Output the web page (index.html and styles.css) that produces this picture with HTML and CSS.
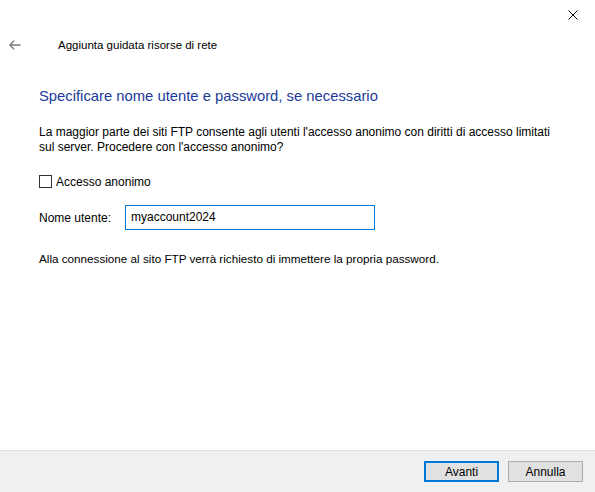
FILE: index.html
```html
<!DOCTYPE html>
<html>
<head>
    <meta charset="utf-8">
    <title>Aggiunta guidata risorse di rete</title>
    <link rel="stylesheet" href="styles.css">
</head>
<body>
    <div class="window">
        <div class="titlebar">
            <button class="close-btn" aria-label="Chiudi">
                <svg width="10" height="10" viewBox="0 0 10 10">
                    <path d="M0.5 0.5 L9.5 9.5 M9.5 0.5 L0.5 9.5" stroke="#000" stroke-width="1" fill="none"/>
                </svg>
            </button>
        </div>
        <div class="wizard-head">
            <span class="back-arrow">
                <svg width="12" height="10" viewBox="0 0 12 10">
                    <path d="M5 0.8 L0.9 5 L5 9.2 M0.9 5 H11.5" stroke="#7a7a7a" stroke-width="1.3" fill="none"/>
                </svg>
            </span>
            <span class="wizard-title">Aggiunta guidata risorse di rete</span>
        </div>

        <div class="content">
            <h1 class="heading">Specificare nome utente e password, se necessario</h1>
            <p class="text">La maggior parte dei siti FTP consente agli utenti l'accesso anonimo con diritti di accesso limitati sul server. Procedere con l'accesso anonimo?</p>

            <label class="check-row">
                <span class="checkbox"></span>
                <span>Accesso anonimo</span>
            </label>

            <div class="field-row">
                <span class="field-label">Nome utente:</span>
                <div class="input">myaccount2024</div>
            </div>

            <p class="text note">Alla connessione al sito FTP verrà richiesto di immettere la propria password.</p>
        </div>

        <div class="footer">
            <button class="btn btn-default">Avanti</button>
            <button class="btn">Annulla</button>
        </div>
    </div>
</body>
</html>
```

FILE: styles.css
```css
html, body {
    margin: 0;
    padding: 0;
    background: #fff;
}
body {
    font-family: "Liberation Sans", Arial, sans-serif;
    font-size: 12px;
    color: #000;
}
.window {
    width: 595px;
    height: 492px;
    display: flex;
    flex-direction: column;
}
.titlebar {
    height: 30px;
    display: flex;
    justify-content: flex-end;
}
.close-btn {
    width: 46px;
    height: 30px;
    border: none;
    background: transparent;
    display: flex;
    align-items: center;
    justify-content: center;
    padding: 0;
    margin-right: -1px;
}
.wizard-head {
    height: 30px;
    display: flex;
    align-items: center;
}
.back-arrow {
    width: 58px;
    padding-left: 9px;
    box-sizing: border-box;
    display: flex;
    align-items: center;
}
.wizard-title {
    font-size: 11.5px;
}
.content {
    flex: 1;
    padding: 0 39px;
}
.heading {
    font-size: 14.8px;
    font-weight: normal;
    color: #1a3a9b;
    margin: 25px 0 0;
    line-height: 22px;
}
.text {
    margin: 0;
    line-height: 15px;
}
.heading + .text {
    margin-top: 18px;
}
.check-row {
    display: flex;
    align-items: center;
    gap: 4px;
    margin-top: 19px;
    height: 15px;
}
.checkbox {
    width: 11px;
    height: 11px;
    border: 1px solid #333;
    background: #fff;
}
.field-row {
    display: flex;
    align-items: center;
    margin-top: 16px;
}
.field-label {
    width: 86px;
}
.input {
    width: 238px;
    height: 23px;
    border: 1px solid #0078d7;
    padding: 0 5px;
    line-height: 23px;
}
.note {
    margin-top: 21px;
    font-size: 11.7px;
}
.footer {
    height: 41px;
    background: #f0f0f0;
    border-top: 1px solid #dfdfdf;
    display: flex;
    align-items: center;
    justify-content: flex-end;
    gap: 9px;
    padding-right: 12px;
}
.btn {
    width: 75px;
    height: 21px;
    font-family: inherit;
    font-size: 12px;
    background: #e1e1e1;
    border: 1px solid #adadad;
    padding: 0;
    color: #000;
}
.btn-default {
    border: 2px solid #0078d7;
}
```
